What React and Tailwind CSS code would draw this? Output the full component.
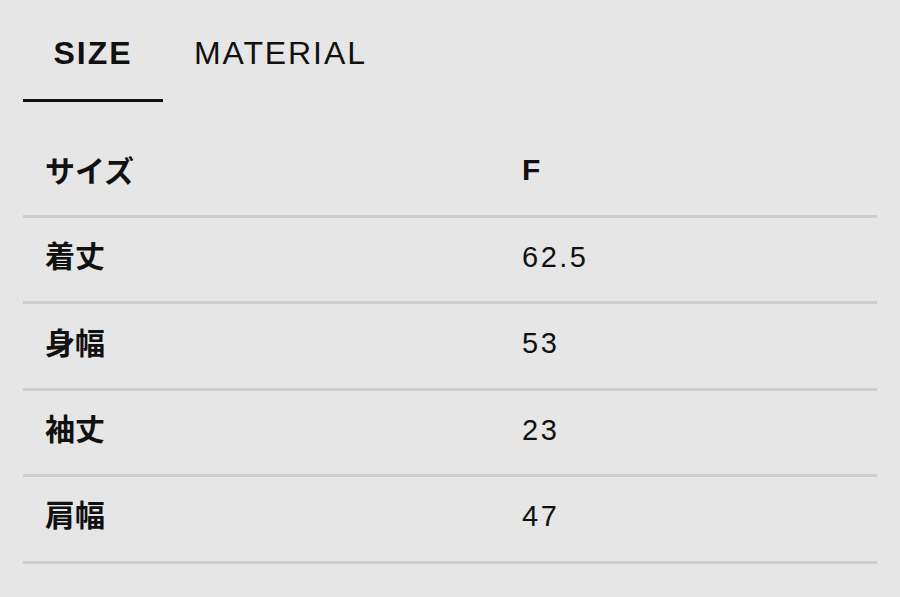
import React, { useState } from 'react';

const rows = [
  { label: '着丈', value: '62.5' },
  { label: '身幅', value: '53' },
  { label: '袖丈', value: '23' },
  { label: '肩幅', value: '47' },
];

const App = () => {
  const [tab, setTab] = useState('size');
  return (
    <div className="min-h-[597px] w-[900px] bg-[#e6e6e6] text-[#111] font-['Liberation_Sans','Noto_Sans_CJK_JP',sans-serif]">
      <div className="px-[23px] pt-[37px]">
        <div className="flex">
          <button
            onClick={() => setTab('size')}
            className={`w-[140px] pb-[30px] text-[32px] leading-[32px] tracking-[2px] font-bold ${tab === 'size' ? 'border-b-[3px] border-[#111]' : 'border-b-[3px] border-transparent'}`}
          >
            SIZE
          </button>
          <button
            onClick={() => setTab('material')}
            className={`pl-[31px] pb-[30px] text-[32px] leading-[32px] tracking-[1.9px] ${tab === 'material' ? 'border-b-[3px] border-[#111] font-bold' : 'border-b-[3px] border-transparent'}`}
          >
            MATERIAL
          </button>
        </div>

        <div className="mt-[33px]">
          <div className="flex items-center h-[83px] border-b-[3px] border-[#cdcdcd] pb-[12px]">
            <div className="w-[499px] pl-[22px] text-[30px] font-bold font-['Noto_Sans_CJK_JP',sans-serif]">サイズ</div>
            <div className="text-[30px] font-bold">F</div>
          </div>
          {rows.map((r) => (
            <div key={r.label} className="flex items-center h-[86.4px] border-b-[3px] border-[#cdcdcd] pb-[4px]">
              <div className="w-[499px] pl-[22px] pb-[6px] text-[30px] font-bold font-['Noto_Sans_CJK_JP',sans-serif]">{r.label}</div>
              <div className="text-[29px] tracking-[2.5px]">{r.value}</div>
            </div>
          ))}
        </div>
      </div>
    </div>
  );
};

export default App;
